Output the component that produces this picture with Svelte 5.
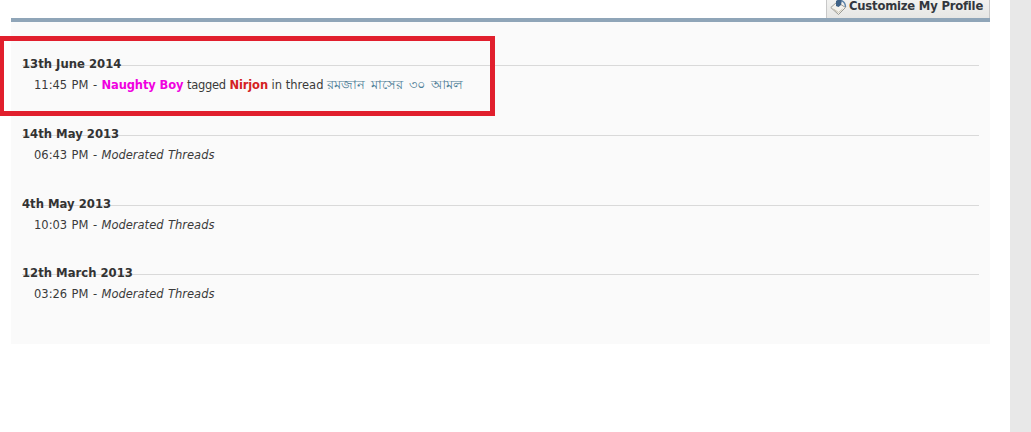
<script>
  const days = [
    { date: '13th June 2014', time: '11:45 PM', tagged: true },
    { date: '14th May 2013', time: '06:43 PM', text: 'Moderated Threads' },
    { date: '4th May 2013', time: '10:03 PM', text: 'Moderated Threads' },
    { date: '12th March 2013', time: '03:26 PM', text: 'Moderated Threads' }
  ];
</script>

<div class="page">
  <main class="content">
    <div class="tabbar">
      <button class="customize">
        <svg width="17" height="17" viewBox="0 0 17 17" aria-hidden="true">
          <path d="M0.8 8.5 L7 3 L15.5 8.5 L8.5 15.5 Z" fill="#f4f2ec" stroke="#9a9a94" stroke-width="1"/>
          <path d="M6 7 L6 2 L9 0 L12 1 L11 6 L8.5 8 Z" fill="#3f6286"/>
          <path d="M11.5 1.5 Q15.5 3.5 15.5 8" fill="none" stroke="#5f86aa" stroke-width="1.4"/>
          <path d="M3.5 10 L8.5 13.5 L12.5 10" fill="none" stroke="#c9c3b2" stroke-width="1"/>
        </svg>
        <span>Customize My Profile</span>
      </button>
    </div>
    <section class="panel">
      {#each days as day}
        <div class="day">
          <h4>{day.date}</h4>
          <p>
            {day.time} -
            {#if day.tagged}
              <span class="activity"><b class="pink">Naughty Boy</b> <span class="verb">tagged</span> <b class="red">Nirjon</b> in thread
              <a href="#thread">রমজান মাসের ৩০ আমল</a></span>
            {:else}
              <em>{day.text}</em>
            {/if}
          </p>
        </div>
      {/each}
    </section>
  </main>
  <aside class="scrollbar"></aside>
  <div class="highlight"></div>
</div>

<style>
  :global(body) {
    margin: 0;
    background: #fff;
  }
  .page {
    position: relative;
    display: flex;
    justify-content: space-between;
    height: 432px;
    overflow: hidden;
    font-family: "DejaVu Sans", Verdana, sans-serif;
    color: #3a3a3a;
    font-size: 11.5px;
  }
  .content {
    width: 979px;
    margin-left: 11px;
  }
  .tabbar {
    display: flex;
    justify-content: flex-end;
    height: 18px;
    overflow: hidden;
  }
  .customize {
    display: flex;
    align-items: center;
    gap: 2px;
    box-sizing: border-box;
    width: 164px;
    height: 18px;
    margin: 0;
    padding: 0 0 7px 3px;
    border: 1px solid #c8c8c8;
    border-top: 0;
    border-bottom: 0;
    background: linear-gradient(#f2f2f0, #e6e6e4);
    font: bold 11.6px "DejaVu Sans", Verdana, sans-serif;
    letter-spacing: -0.2px;
    color: #33373d;
    white-space: nowrap;
  }
  .customize svg {
    flex: none;
    margin-top: 3px;
  }
  .panel {
    height: 326px;
    box-sizing: border-box;
    border-top: 4px solid #8fa5b8;
    background: #fafafa;
    padding: 33.3px 11px 0;
  }
  .day {
    height: 69.7px;
  }
  h4 {
    margin: 0;
    height: 16px;
    font-size: 11.65px;
    line-height: 18px;
    font-weight: bold;
    color: #333;
    background: linear-gradient(#d9d9d9, #d9d9d9) 0 10px / 100% 1px no-repeat;
  }
  p {
    margin: 5px 0 0 12px;
    line-height: 18px;
    word-spacing: 0.8px;
    white-space: nowrap;
  }
  .activity {
    word-spacing: 0;
  }
  b {
    font-size: 11.5px;
    letter-spacing: -0.12px;
  }
  .verb {
    letter-spacing: -0.3px;
  }
  .pink { color: #f000e0; }
  .red { color: #d42222; }
  a {
    color: #4d7d96;
    text-decoration: none;
    font-size: 13px;
    word-spacing: 2.5px;
    line-height: 0;
    font-family: "Noto Sans", "DejaVu Sans", sans-serif;
  }
  .scrollbar {
    width: 21px;
    background: #e8e8e8;
  }
  .highlight {
    position: absolute;
    left: -1px;
    top: 36px;
    width: 486px;
    height: 70px;
    border: 5px solid #e11f2d;
  }
</style>
